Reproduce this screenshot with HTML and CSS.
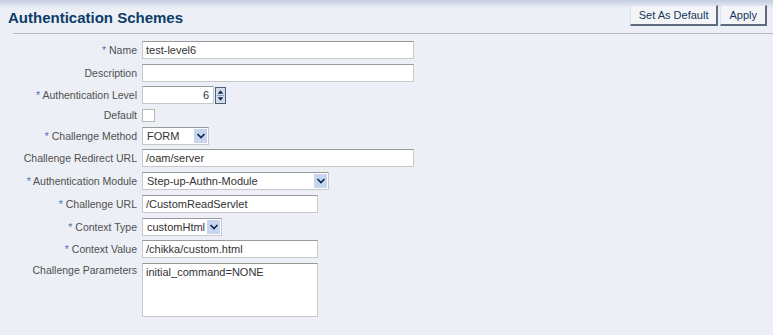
FILE: index.html
```html
<!DOCTYPE html>
<html lang="en">
<head>
<meta charset="UTF-8" />
<title>Authentication Schemes</title>
<link rel="stylesheet" href="styles.css">
</head>
<body>

<div class="header">
  <h1>Authentication Schemes</h1>
  <div class="actions">
    <button class="btn">Set As Default</button>
    <button class="btn">Apply</button>
  </div>
</div>

<form class="scheme-form">
  <label class="lbl req">Name</label>
  <div class="field"><input class="txt w-long" type="text" value="test-level6"></div>

  <label class="lbl">Description</label>
  <div class="field"><input class="txt w-long" type="text" value=""></div>

  <label class="lbl req">Authentication Level</label>
  <div class="field">
    <input class="txt num" type="text" value="6">
    <span class="spin">
      <svg width="11" height="17" viewBox="0 0 11 17"><path d="M5.5 2 L9 6.5 H2 Z M2 10.5 H9 L5.5 15 Z" fill="#0c2a55"/><path d="M1 8.5 H10" stroke="#7d8fa8" stroke-width="1"/></svg>
    </span>
  </div>

  <label class="lbl short">Default</label>
  <div class="field short"><span class="check"></span></div>

  <label class="lbl req">Challenge Method</label>
  <div class="field"><span class="sel w-method">FORM<span class="arrow"><svg width="10" height="8" viewBox="0 0 10 8"><path d="M1.5 2 L5 5.5 L8.5 2" stroke="#0c2a55" stroke-width="1.7" fill="none"/></svg></span></span></div>

  <label class="lbl">Challenge Redirect URL</label>
  <div class="field"><input class="txt w-long" type="text" value="/oam/server"></div>

  <label class="lbl req">Authentication Module</label>
  <div class="field"><span class="sel w-module">Step-up-Authn-Module<span class="arrow"><svg width="10" height="8" viewBox="0 0 10 8"><path d="M1.5 2 L5 5.5 L8.5 2" stroke="#0c2a55" stroke-width="1.7" fill="none"/></svg></span></span></div>

  <label class="lbl req">Challenge URL</label>
  <div class="field"><input class="txt w-mid" type="text" value="/CustomReadServlet"></div>

  <label class="lbl req">Context Type</label>
  <div class="field"><span class="sel w-type">customHtml<span class="arrow"><svg width="10" height="8" viewBox="0 0 10 8"><path d="M1.5 2 L5 5.5 L8.5 2" stroke="#0c2a55" stroke-width="1.7" fill="none"/></svg></span></span></div>

  <label class="lbl req">Context Value</label>
  <div class="field"><input class="txt w-mid" type="text" value="/chikka/custom.html"></div>

  <label class="lbl top">Challenge Parameters</label>
  <div class="field tall"><textarea class="area w-mid">initial_command=NONE</textarea></div>
</form>

</body>
</html>
```

FILE: styles.css
```css
/* oracle access manager style form */
body {
  margin: 0;
  font-family: 'Liberation Sans', Arial, sans-serif;
  font-size: 11px;
  color: #333;
  background: #eceff5;
  width: 773px;
  height: 335px;
  overflow: hidden;
}
.header {
  display: flex;
  justify-content: space-between;
  align-items: flex-start;
  height: 33px;
  border-bottom: 1px solid #b2b8c8;
  background: linear-gradient(#c4cce0 0, #dde2ee 5px, #eceff5 9px);
  position: relative;
}
.header:after {
  content: "";
  position: absolute;
  left: 0;
  bottom: -1px;
  width: 13px;
  height: 1px;
  background: #eceff5;
}
h1 {
  margin: 9px 0 0 8px;
  font-size: 15px;
  font-weight: bold;
  color: #0d3c6a;
}
.actions {
  display: flex;
  gap: 2px;
  margin: 5px 6px 0 0;
}
.btn {
  font-family: 'Liberation Sans', Arial, sans-serif;
  font-size: 11px;
  color: #17355a;
  height: 21px;
  padding: 0 8px;
  background: #f3f5f9;
  border: 1px solid #dde3ee;
  border-right: 2px solid #5e6b7d;
  border-bottom: 2px solid #5e6b7d;
}
.scheme-form {
  display: grid;
  grid-template-columns: 137px auto;
  grid-template-rows: 18px 18px 18px 13px 18px 18px 18px 18px 18px 18px 54px;
  column-gap: 5px;
  row-gap: 4.7px;
  margin-top: 7px;
}
.lbl {
  text-align: right;
  color: #505050;
  font-size: 10.5px;
  line-height: 18px;
  white-space: nowrap;
}
.lbl.req:before {
  content: "* ";
  color: #4a74b8;
}
.lbl.short {
  line-height: 13px;
}
.lbl.top {
  line-height: 14px;
}
.field {
  display: flex;
  align-items: center;
}
.tall {
  align-items: flex-start;
}
.txt, .area {
  font-family: 'Liberation Sans', Arial, sans-serif;
  font-size: 11px;
  color: #333;
  box-sizing: border-box;
  height: 18px;
  padding: 0 3px;
  background: #fff;
  border: 1px solid #c8c8c8;
  border-top-color: #9a9a9a;
  outline: none;
  margin: 0;
}
.area {
  height: 54px;
  resize: none;
  padding: 2px 3px;
}
.w-long { width: 272px; }
.w-mid { width: 176px; }
.num {
  width: 72px;
  text-align: right;
  padding-right: 4px;
}
.spin {
  display: inline-flex;
  align-items: center;
  justify-content: center;
  width: 11px;
  height: 17px;
  margin-left: 1px;
  background: #d2dcec;
  border: 1px solid #4f6079;
  box-sizing: border-box;
}
.spin svg {
  display: block;
}
.check {
  display: inline-block;
  width: 13px;
  height: 13px;
  box-sizing: border-box;
  background: #fff;
  border: 1px solid #b8b8b8;
}
.sel {
  display: inline-flex;
  align-items: center;
  justify-content: space-between;
  box-sizing: border-box;
  height: 18px;
  padding: 0 1px 0 4px;
  background: #fff;
  border: 1px solid #c8c8c8;
  border-top-color: #9a9a9a;
  color: #333;
}
.w-method { width: 67px; }
.w-module { width: 187px; }
.w-type { width: 80px; }
.arrow {
  display: inline-flex;
  align-items: center;
  justify-content: center;
  width: 13px;
  height: 14px;
  background: #c7d5ee;
}
```
